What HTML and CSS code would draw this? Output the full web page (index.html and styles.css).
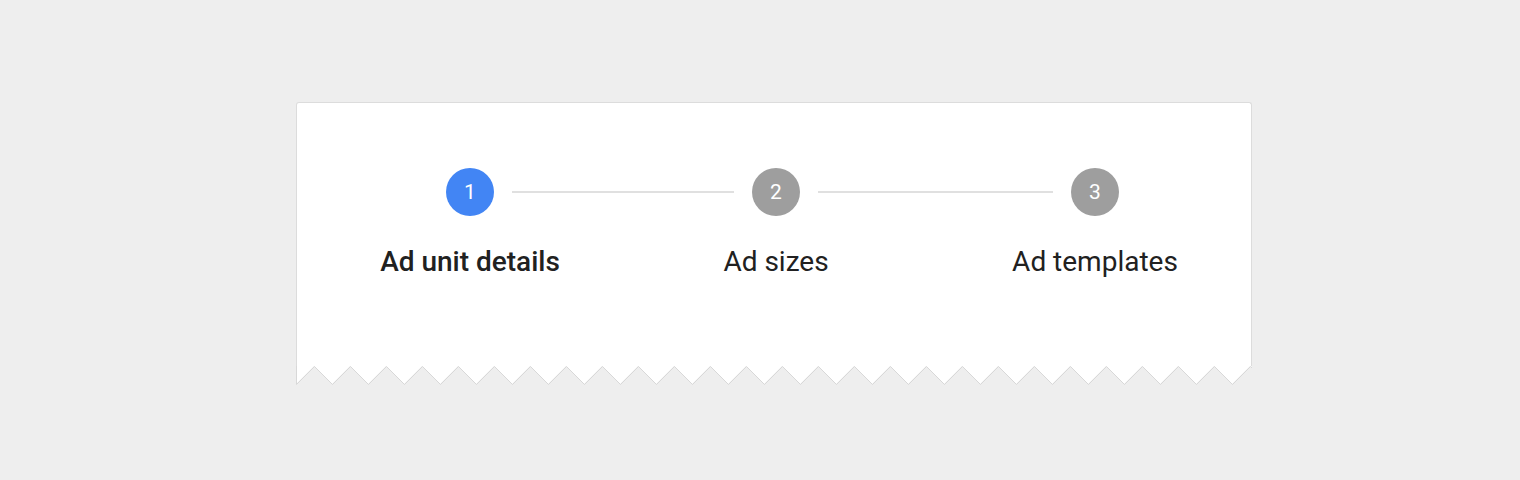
FILE: index.html
```html
<!DOCTYPE html>
<html lang="en">
<head>
<meta charset="utf-8">
<title>Stepper</title>
<link rel="stylesheet" href="styles.css">
</head>
<body>
<div class="page">
  <div class="card">
    <div class="card-body">
      <div class="stepper">
        <div class="circle circle--active">1</div>
        <div class="connector"></div>
        <div class="circle">2</div>
        <div class="connector"></div>
        <div class="circle">3</div>
        <div class="label label--active col-1">Ad unit details</div>
        <div class="label col-3">Ad sizes</div>
        <div class="label col-5">Ad templates</div>
      </div>
    </div>
    <svg class="torn-edge" width="956" height="20" viewBox="0 0 956 20" aria-hidden="true">
      <path class="torn-fill" d="M0,0 V18 l18,-18 l18,18 l18,-18 l18,18 l18,-18 l18,18 l18,-18 l18,18 l18,-18 l18,18 l18,-18 l18,18 l18,-18 l18,18 l18,-18 l18,18 l18,-18 l18,18 l18,-18 l18,18 l18,-18 l18,18 l18,-18 l18,18 l18,-18 l18,18 l18,-18 l18,18 l18,-18 l18,18 l18,-18 l18,18 l18,-18 l18,18 l18,-18 l18,18 l18,-18 l18,18 l18,-18 l18,18 l18,-18 l18,18 l18,-18 l18,18 l18,-18 l18,18 l18,-18 l18,18 l18,-18 l18,18 l18,-18 l18,18 l18,-18 l18,18 l18,-18 L956,0 Z"/>
      <path class="torn-stroke" d="M0.5,0 V18.5 l18,-18 l18,18 l18,-18 l18,18 l18,-18 l18,18 l18,-18 l18,18 l18,-18 l18,18 l18,-18 l18,18 l18,-18 l18,18 l18,-18 l18,18 l18,-18 l18,18 l18,-18 l18,18 l18,-18 l18,18 l18,-18 l18,18 l18,-18 l18,18 l18,-18 l18,18 l18,-18 l18,18 l18,-18 l18,18 l18,-18 l18,18 l18,-18 l18,18 l18,-18 l18,18 l18,-18 l18,18 l18,-18 l18,18 l18,-18 l18,18 l18,-18 l18,18 l18,-18 l18,18 l18,-18 l18,18 l18,-18 l18,18 l18,-18 l18,18 l18,-18 L955.5,0"/>
    </svg>
  </div>
</div>
</body>
</html>
```

FILE: styles.css
```css
html, body {
  margin: 0;
  padding: 0;
  background: #eeeeee;
  font-family: Roboto, "Liberation Sans", Arial, sans-serif;
}

.page {
  padding: 102px 0 0 296px;
}

.card {
  width: 956px;
}

.card-body {
  box-sizing: border-box;
  height: 264px;
  background: #ffffff;
  border: 1px solid #dcdcdc;
  border-bottom: none;
  border-radius: 3px 3px 0 0;
  padding: 65px 0 0 149px;
}

.stepper {
  display: grid;
  grid-template-columns: 48px 258px 48px 271px 48px;
  grid-template-rows: 48px auto;
  row-gap: 30px;
}

.circle {
  width: 48px;
  height: 48px;
  border-radius: 50%;
  background: #9e9e9e;
  color: #ffffff;
  font-size: 21px;
  display: flex;
  align-items: center;
  justify-content: center;
}

.circle--active {
  background: #4285f4;
}

.connector {
  align-self: center;
  height: 2px;
  margin: 0 18px;
  background: #e0e0e0;
}

.label {
  grid-row: 2;
  justify-self: center;
  white-space: nowrap;
  font-size: 28px;
  line-height: 32px;
  color: #212121;
}

.label--active {
  font-weight: 500;
}

.col-1 { grid-column: 1; }
.col-3 { grid-column: 3; }
.col-5 { grid-column: 5; }

.torn-edge {
  display: block;
}

.torn-fill {
  fill: #ffffff;
}

.torn-stroke {
  fill: none;
  stroke: #d8d8d8;
  stroke-width: 1;
}
```
